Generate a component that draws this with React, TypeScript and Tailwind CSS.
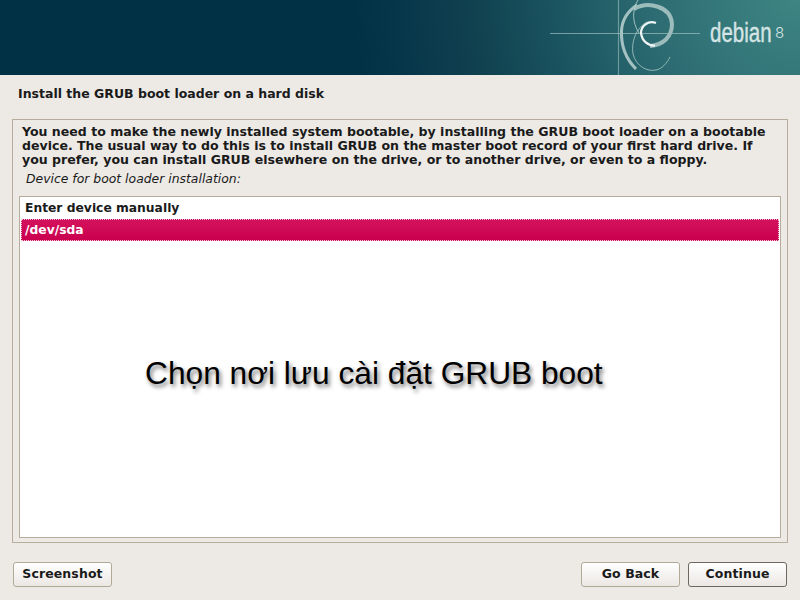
function DebianBanner() {
    return (
        <div className="relative h-[75px] shrink-0 overflow-hidden bg-[#003145]">
            {/* Banner artwork: soft arcs spreading out from the top right corner */}
            <svg className="absolute inset-0" width="800" height="75" viewBox="0 0 800 75">
                <defs>
                    <radialGradient id="glow" gradientUnits="userSpaceOnUse" cx="800" cy="-10" r="450">
                        <stop offset="0" stopColor="#3f8684" />
                        <stop offset="0.3" stopColor="#2f6f74" />
                        <stop offset="0.55" stopColor="#1a5460" />
                        <stop offset="0.72" stopColor="#114250" />
                        <stop offset="0.9" stopColor="#06364a" />
                        <stop offset="1" stopColor="#003145" />
                    </radialGradient>
                </defs>
                <rect width="800" height="75" fill="url(#glow)" />
                <path d="M550 33.5 H700" stroke="#a9c8c8" strokeWidth="1" opacity="0.65" />
                <path d="M618.5 0 V75" stroke="#a9c8c8" strokeWidth="1.2" opacity="0.55" />
                {/* Swirl */}
                <path d="M637 5 C628 11 622 20 621.5 31 C621 45 625 58 636 69" stroke="#a5c2c3" strokeWidth="3" fill="none" />
                <path d="M634 9 C648 1 671 6 672 24 C672 37 663 45 650 46" stroke="#9cbcbc" strokeWidth="4" fill="none" />
                <path d="M656 23 C648 20 641 26 641 33 C642 41 648 46 655 45.5" stroke="#eef4f3" strokeWidth="2.2" fill="none" />
                <path d="M638 0 C632 10 632 22 639 33" stroke="#b5d0d0" strokeWidth="1" fill="none" opacity="0.85" />
                <path d="M647 22 C636 28 631 42 633 54 C636 66 647 72 656 70 C662 69 667 63 670 57" stroke="#a9c8c8" strokeWidth="1" fill="none" opacity="0.8" />
            </svg>
            <span className="absolute left-[710px] top-[15px] origin-left scale-x-[0.76] text-[27px] leading-[36px] text-[#d5e4e4] [-webkit-text-stroke:0.4px_#d5e4e4] font-['Liberation_Sans',sans-serif]">
                debian
            </span>
            <span className="absolute left-[775px] top-[24px] text-[15px] leading-[18px] font-light text-[#d5e4e4] font-['Inter',sans-serif]">8</span>
        </div>
    );
}

function WizardButton({ label, dark }: { label: string; dark?: boolean }) {
    return (
        <button
            className={`h-[25px] w-[99px] rounded-[3px] border bg-gradient-to-b from-white to-[#ebe7e3] text-[12.5px] font-bold tracking-[0.1px] text-[#1a1a1a] ${
                dark ? "border-[#6e675f]" : "border-[#b3a999]"
            }`}
        >
            {label}
        </button>
    );
}

export default function App() {
    return (
        <div className="flex h-[600px] w-[800px] flex-col overflow-hidden bg-[#edeae6] font-['DejaVu_Sans',sans-serif] text-[#1a1a1a]">
            <DebianBanner />

            <h1 className="ml-[18px] mt-[10px] text-[12.5px] leading-[17px] font-bold">
                Install the GRUB boot loader on a hard disk
            </h1>

            {/* Main frame */}
            <div className="ml-[12px] mt-[17px] flex h-[424px] w-[776px] flex-col border border-[#b8ad9c] px-[6px]">
                <p className="ml-[3px] mt-[5px] w-[750px] text-[12.55px] leading-[14px] font-bold">
                    You need to make the newly installed system bootable, by installing the GRUB boot loader on a bootable
                    device. The usual way to do this is to install GRUB on the master boot record of your first hard drive. If
                    you prefer, you can install GRUB elsewhere on the drive, or to another drive, or even to a floppy.
                </p>
                <p className="ml-[7px] mt-[4px] text-[12.4px] leading-[16px] italic">Device for boot loader installation:</p>

                <div className="relative mt-[9px] h-[342px] border border-[#b8ad9c] bg-white p-px">
                    <div className="pl-[4px] text-[12.3px] leading-[20px] font-bold">Enter device manually</div>
                    <div className="mt-px h-[22px] border border-dotted border-[#f4c7d8] bg-gradient-to-b from-[#d4115c] to-[#c9004f] pl-[3px] text-[12.3px] leading-[20px] font-bold text-white">
                        /dev/sda
                    </div>
                    {/* Caption added on top of the screenshot */}
                    <div className="absolute left-[125px] top-[152px] whitespace-nowrap font-['Liberation_Sans',sans-serif] text-[31.7px] leading-[48px] text-black [text-shadow:2px_3px_4px_rgba(0,0,0,0.55)]">
                        Chọn nơi lưu cài đặt GRUB boot
                    </div>
                </div>
            </div>

            <div className="mt-[19px] flex px-[13px]">
                <WizardButton label="Screenshot" />
                <div className="ml-auto flex gap-[8px]">
                    <WizardButton label="Go Back" />
                    <WizardButton label="Continue" dark />
                </div>
            </div>
        </div>
    );
}
